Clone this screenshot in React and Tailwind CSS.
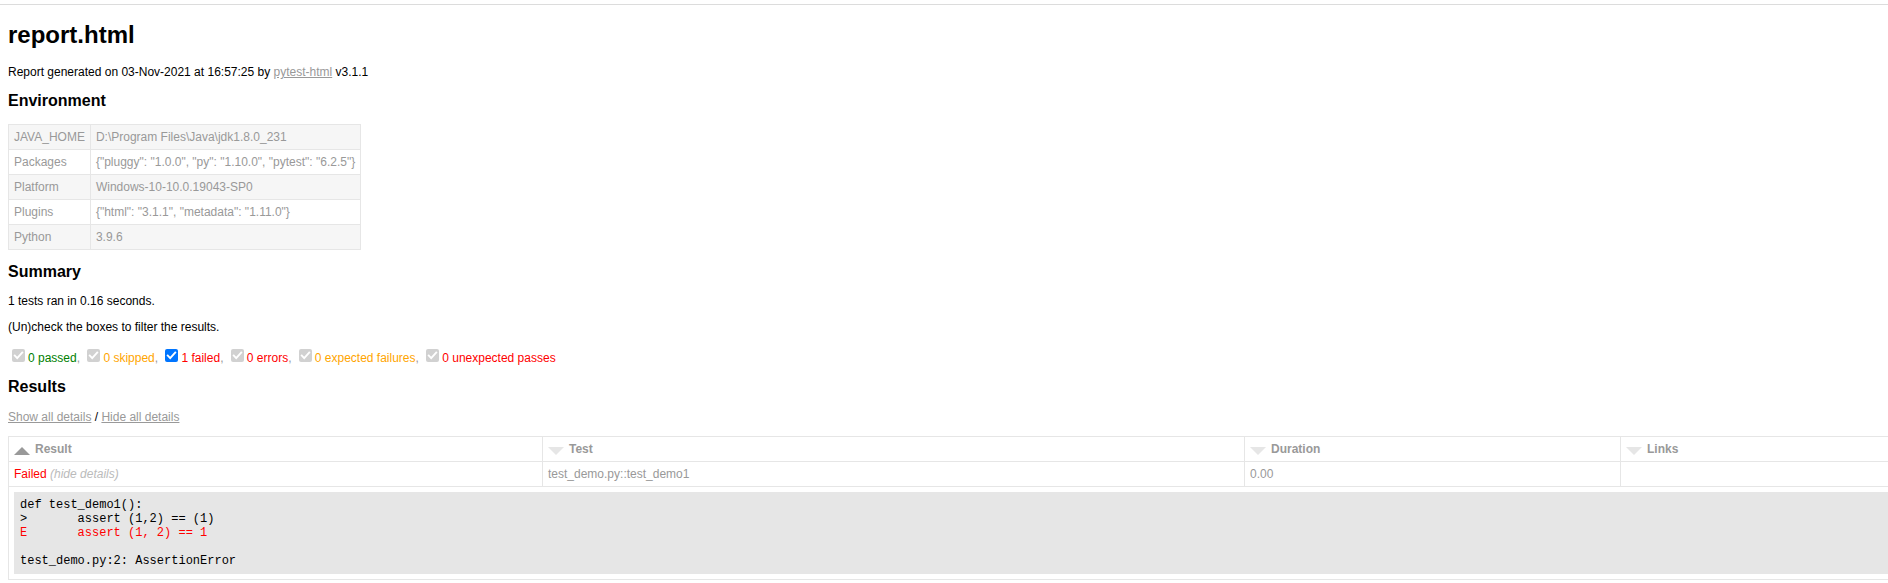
const env = [
  ['JAVA_HOME', 'D:\\Program Files\\Java\\jdk1.8.0_231'],
  ['Packages', '{"pluggy": "1.0.0", "py": "1.10.0", "pytest": "6.2.5"}'],
  ['Platform', 'Windows-10-10.0.19043-SP0'],
  ['Plugins', '{"html": "3.1.1", "metadata": "1.11.0"}'],
  ['Python', '3.9.6'],
];

const filters = [
  { label: '0 passed', color: 'text-[#008000]', active: false },
  { label: '0 skipped', color: 'text-[#ffa500]', active: false },
  { label: '1 failed', color: 'text-[#ff0000]', active: true },
  { label: '0 errors', color: 'text-[#ff0000]', active: false },
  { label: '0 expected failures', color: 'text-[#ffa500]', active: false },
  { label: '0 unexpected passes', color: 'text-[#ff0000]', active: false },
];

function Checkbox({ active }) {
  return (
    <span
      className={
        'inline-block align-baseline w-[13px] h-[13px] mt-[3px] ml-[4px] mr-[3px] rounded-[2px] ' +
        (active ? 'bg-[#0075ff]' : 'bg-[#d1d1d1]')
      }
    >
      <svg viewBox="0 0 13 13" className="block w-[13px] h-[13px]">
        <path d="M2.8 6.6 L5.2 9.1 L10.2 3.6" fill="none" stroke="white" strokeWidth="1.9" strokeLinecap="square" />
      </svg>
    </span>
  );
}

function SortIcon({ active }) {
  return active ? (
    <span className="float-left w-0 h-0 mt-[5px] mr-[5px] border-x-[8px] border-x-transparent border-b-[8px] border-b-[#999]" />
  ) : (
    <span className="float-left w-0 h-0 mt-[5px] mr-[5px] border-x-[8px] border-x-transparent border-t-[8px] border-t-[#e6e6e6]" />
  );
}

export default function App() {
  return (
    <div className="h-[583px] overflow-hidden bg-white font-['Liberation_Sans',Arial,sans-serif] text-[12px] leading-[normal] text-[#999]">
      <div className="mt-[4px] border-t border-[#dcdcdc] px-[8px]">
        <h1 className="my-[16px] text-[24px] leading-[normal] font-bold text-black">report.html</h1>
        <p className="my-[12px] text-black">
          Report generated on 03-Nov-2021 at 16:57:25 by{' '}
          <a href="#" className="text-[#999] underline">pytest-html</a> v3.1.1
        </p>

        <h2 className="my-[13.28px] text-[16px] leading-[normal] font-bold text-black">Environment</h2>
        <table className="border-collapse">
          <tbody>
            {env.map(([k, v], i) => (
              <tr key={k} className={i % 2 === 0 ? 'bg-[#f6f6f6]' : ''}>
                <td className="border border-[#e6e6e6] p-[5px]">{k}</td>
                <td className="border border-[#e6e6e6] p-[5px]">{v}</td>
              </tr>
            ))}
          </tbody>
        </table>

        <h2 className="my-[13.28px] text-[16px] leading-[normal] font-bold text-black">Summary</h2>
        <p className="my-[12px] text-black">1 tests ran in 0.16 seconds. </p>
        <p className="my-[12px] text-black">(Un)check the boxes to filter the results.</p>
        <p className="my-[12px] text-[#999]">
          {filters.map((f, i) => (
            <span key={f.label}>
              <Checkbox active={f.active} />
              <span className={f.color}>{f.label}</span>
              {i < filters.length - 1 ? ', ' : ''}
            </span>
          ))}
        </p>

        <h2 className="my-[13.28px] text-[16px] leading-[normal] font-bold text-black">Results</h2>
        <p className="my-[12px] text-black">
          <a href="#" className="text-[#999] underline">Show all details</a> /{' '}
          <a href="#" className="text-[#999] underline">Hide all details</a>
        </p>

        <table className="border-collapse table-fixed w-[2300px] border border-[#e6e6e6] text-left">
          <colgroup>
            <col className="w-[534px]" />
            <col className="w-[702px]" />
            <col className="w-[376px]" />
            <col />
          </colgroup>
          <thead>
            <tr>
              <th className="border border-[#e6e6e6] p-[5px] font-bold">
                <SortIcon active />
                Result
              </th>
              <th className="border border-[#e6e6e6] p-[5px] font-bold">
                <SortIcon />
                Test
              </th>
              <th className="border border-[#e6e6e6] p-[5px] font-bold">
                <SortIcon />
                Duration
              </th>
              <th className="border border-[#e6e6e6] p-[5px] font-bold">
                <SortIcon />
                Links
              </th>
            </tr>
          </thead>
          <tbody>
            <tr>
              <td className="border border-[#e6e6e6] p-[5px] text-[#ff0000]">
                Failed<span className="italic text-[#bbb]"> (hide details)</span>
              </td>
              <td className="border border-[#e6e6e6] p-[5px]">test_demo.py::test_demo1</td>
              <td className="border border-[#e6e6e6] p-[5px]">0.00</td>
              <td className="border border-[#e6e6e6] p-[5px]"></td>
            </tr>
            <tr>
              <td colSpan={4} className="border border-[#e6e6e6] p-[5px]">
                <div className="block bg-[#e6e6e6] border border-[#e6e6e6] p-[5px] font-['Liberation_Mono','Courier_New',monospace] text-[12px] leading-[14px] text-black whitespace-pre-wrap">
                  {'def test_demo1():\n>       assert (1,2) == (1)\n'}
                  <span className="text-[#ff0000]">{'E       assert (1, 2) == 1'}</span>
                  {'\n\ntest_demo.py:2: AssertionError'}
                </div>
              </td>
            </tr>
          </tbody>
        </table>
      </div>
    </div>
  );
}
